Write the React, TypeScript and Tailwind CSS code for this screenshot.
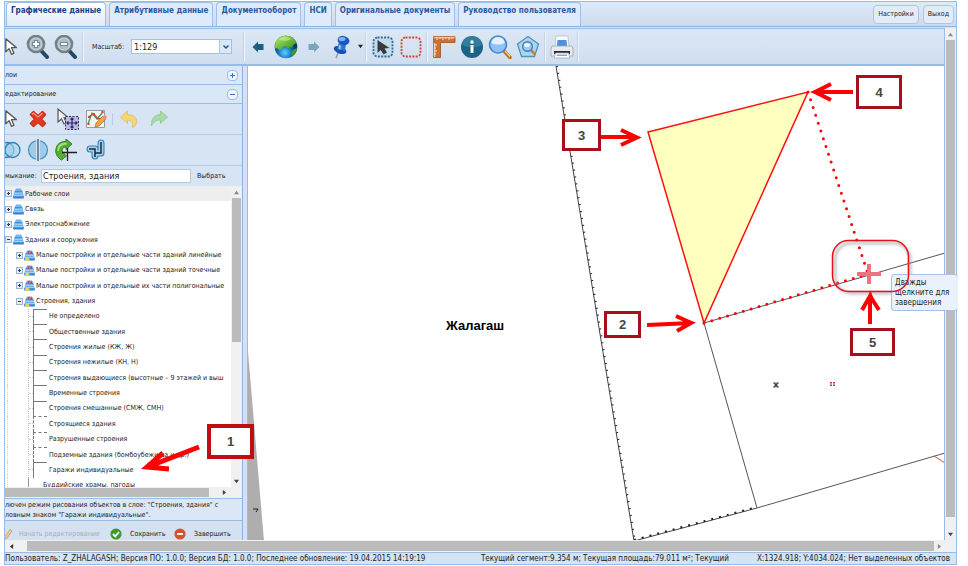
import React from "react";
import type { ReactNode } from "react";

/* ---------- icons ---------- */

const Cursor = () => (
  <svg viewBox="0 0 16 22" className="h-[18px] w-[13px]">
    <path d="M1 1v16l4-4 3 7 3-1.300-3-7h6z" fill="#fff" stroke="#555" strokeWidth="1.600" strokeLinejoin="round" />
  </svg>
);

const Lens = ({ plus }: { plus?: boolean }) => (
  <svg viewBox="0 0 24 24" className="h-6 w-6">
    <path d="M15.500 16l5.500 6" stroke="#1f4a66" strokeWidth="4" strokeLinecap="round" />
    <circle cx="10" cy="9" r="8" fill="#c3d3da" stroke="#757f84" strokeWidth="2.600" />
    <circle cx="10" cy="9" r="5.500" fill="#a9c0ca" />
    <path d={plus ? "M6 9h8M10 5v8" : "M6 9h8"} stroke="#6d8a98" strokeWidth="4" />
    <path d={plus ? "M7 9h6M10 6v6" : "M7 9h6"} stroke="#fff" strokeWidth="2" />
  </svg>
);

const FatArrow = ({ right }: { right?: boolean }) => (
  <svg viewBox="0 0 12 12" className="h-3 w-3">
    <path
      d={right ? "M11.500 6L6 .5V3H.5v6H6v2.500z" : "M.5 6L6 .5V3h5.500v6H6v2.500z"}
      fill={right ? "#7aa6bf" : "#1d5f82"}
    />
  </svg>
);

const Globe = () => (
  <svg viewBox="0 0 24 24" className="h-6 w-6">
    <defs>
      <radialGradient id="sea" cx=".45" cy=".75">
        <stop offset="0" stopColor="#5fd0fb" />
        <stop offset=".6" stopColor="#1473c4" />
        <stop offset="1" stopColor="#063a70" />
      </radialGradient>
      <linearGradient id="land" x1="0" y1="0" x2="1" y2="1">
        <stop offset="0" stopColor="#b4ee5c" />
        <stop offset="1" stopColor="#2c8a1c" />
      </linearGradient>
    </defs>
    <circle cx="12" cy="12" r="11.300" fill="url(#sea)" />
    <path
      d="M1.500 8C3 3.500 7 .8 12 .8c5 0 9 3 10.500 7l-3 2-1.500 3-2-1-1.500 2-2.500-2.500-3 .5-1.500 2.500-2 1-2-2-2 .500C.8 12 1 10 1.500 8z"
      fill="url(#land)"
    />
    <path d="M18 16l2.500-2 2.500-1c-.2 4-2.500 6.500-4.500 8-1.200-1.500-1.300-3.500-.5-5z" fill="#3c9c2c" />
    <path d="M5 4c4-3 10-2 12 0-3 2-8 3-12 0z" fill="#fff" opacity=".35" />
  </svg>
);

const Pin = () => (
  <svg viewBox="0 0 18 24" className="h-6 w-[18px]">
    <path d="M5.500 17L3 23" stroke="#8b98a5" strokeWidth="1.500" />
    <ellipse cx="7" cy="15" rx="6.500" ry="3.600" transform="rotate(20 7 15)" fill="#1450b5" />
    <path d="M6 7l7 2-1 7-8-2z" fill="#2b74dc" />
    <ellipse cx="10.500" cy="5.500" rx="6" ry="4.500" transform="rotate(15 10.500 5.500)" fill="#1a58c2" />
    <ellipse cx="9" cy="4" rx="3.500" ry="2" fill="#79b4f7" />
    <path d="M6 10l2 .5-.5 4-2-.5z" fill="#9ac6fa" />
  </svg>
);

const Marquee = ({ color, arrow }: { color: string; arrow?: boolean }) => (
  <svg viewBox="0 0 22 22" className="h-[22px] w-[22px]">
    <rect x="1.500" y="1.500" width="19" height="19" rx="4" fill={arrow ? "#c8daea" : "none"} stroke={color} strokeWidth="1.800" strokeDasharray="2 1.300" />
    {arrow && <path d="M5.500 4v13l3.200-3 2.800 4.500 3.500-2-2.500-4 5-.5z" fill="#333b42" />}
  </svg>
);

const Ruler = () => (
  <svg viewBox="0 0 24 24" className="h-6 w-6">
    <path d="M1.500 1.500h21.500v6H8.500v15h-7z" fill="#c9703d" stroke="#a04d20" strokeWidth=".8" />
    <path d="M1.500 2.500H23" stroke="#f2b58b" strokeWidth="1.500" />
    <path d="M2.500 8v14" stroke="#f2c19c" strokeWidth="1.500" />
    <path d="M5 2v3M8 2v2M11 2v3M14 2v2M17 2v3M20 2v2M2 10h3M2 13h2M2 16h3M2 19h2" stroke="#fff0e0" strokeWidth=".9" />
  </svg>
);

const Info = () => (
  <svg viewBox="0 0 24 24" className="h-6 w-6">
    <circle cx="12" cy="12" r="11" fill="#1a6486" />
    <path d="M2 10a10 9 0 0 1 20 0c-5 3-14 3-20 0z" fill="#3f8eae" opacity=".6" />
    <circle cx="12" cy="7" r="1.700" fill="#fff" />
    <path d="M12 10v8" stroke="#fff" strokeWidth="3" />
  </svg>
);

const Magnifier = () => (
  <svg viewBox="0 0 24 24" className="h-6 w-6">
    <path d="M16.500 16.500l5.500 6" stroke="#b9771f" strokeWidth="3.600" strokeLinecap="round" />
    <path d="M17 16l5 5.500" stroke="#f6cd7c" strokeWidth="1.200" />
    <circle cx="10" cy="9.500" r="8.500" fill="#8fc2f8" stroke="#4a83cc" strokeWidth="1.600" />
    <path d="M3.500 8a6.500 6 0 0 1 13 0c-4 2-9 2-13 0z" fill="#e3f1ff" />
  </svg>
);

const PolygonLens = () => (
  <svg viewBox="0 0 24 24" className="h-6 w-6">
    <path d="M12 1.500L22.500 9l-4 12.500h-13L1.500 9z" fill="#aed5ee" stroke="#4d94bd" strokeWidth="1.300" />
    <path d="M15 15l4 4.500" stroke="#c78128" strokeWidth="2.600" />
    <circle cx="11.500" cy="11.500" r="4.800" fill="#9acbfb" stroke="#3f7dc4" strokeWidth="1.400" />
    <ellipse cx="11" cy="10" rx="3" ry="2" fill="#e9f5ff" />
  </svg>
);

const Printer = () => (
  <svg viewBox="0 0 24 24" className="h-6 w-6">
    <path d="M6 1h12l1 11H5z" fill="#fafafa" stroke="#b9bec4" strokeWidth=".8" />
    <path d="M7.500 5h9l.7 7H6.800z" fill="#4d92e2" />
    <path d="M2 11h20l1 3v7H1v-7z" fill="#e8eaed" stroke="#a5abb2" strokeWidth=".9" />
    <path d="M4 16h16v3H4z" fill="#26292d" />
    <path d="M5.500 18h13l1.500 5H4z" fill="#fff" stroke="#a5abb2" strokeWidth=".8" />
    <path d="M7 19.500h10v1.500H6.500z" fill="#77afe8" />
  </svg>
);

const RedCross = () => (
  <svg viewBox="0 0 18 18" className="h-[18px] w-[18px]">
    <path d="M1.500 4.500l3-3L9 5.500l4.500-4 3 3L12.500 9l4 4.500-3 3-4.500-4-4.500 4-3-3 4-4.500z" fill="#e53a22" stroke="#d0301a" strokeWidth="1.600" strokeLinejoin="round" />
    <path d="M3 4.500l1.500-1.500L9 7l4.500-4" fill="none" stroke="#f79a86" strokeWidth="1.200" />
  </svg>
);

const MoveNode = () => (
  <svg viewBox="0 0 22 22" className="h-[22px] w-[22px]">
    <path d="M1 1v13l3.500-3 2.500 5 2.500-1.200-2.500-5h4.500z" fill="#f4f4f4" stroke="#555" strokeWidth="1.200" />
    <path d="M8.500 8.500h13v13h-13z" fill="#b6b5ee" stroke="#333" strokeWidth="1" strokeDasharray="2 1.500" />
    <path d="M15 10v10M10 15h10M13.500 11.500L15 10l1.500 1.500M13.500 18.500L15 20l1.500-1.500M11.500 13.500L10 15l1.500 1.500M18.500 13.500L20 15l-1.500 1.500" fill="none" stroke="#2a2a55" strokeWidth="1.200" />
  </svg>
);

const EditChart = () => (
  <svg viewBox="0 0 22 22" className="h-[22px] w-[22px]">
    <path d="M1.500 2.500h18v17h-18z" fill="#f3f3f3" stroke="#9a9a9a" />
    <path d="M3 16l4-11 5 6 6-7" fill="none" stroke="#3c9f45" strokeWidth="1.300" />
    <path d="M3 9l6-3 4 5 5-1" fill="none" stroke="#d8403a" strokeWidth="1.300" />
    <path d="M3 8h2v2H3zM8 5h2v2H8zM2.500 15h2v2h-2zM16.500 3h2v2h-2z" fill="#d8403a" />
    <path d="M10 19l1-4 7-7 3 3-7 7z" fill="#f4a445" stroke="#b56d1e" strokeWidth=".7" />
    <path d="M17.500 8.500l2-2 2.500 2.500-2 2z" fill="#ef8a87" />
  </svg>
);

const Turn = ({ redo }: { redo?: boolean }) => (
  <svg viewBox="0 0 18 18" className="h-[18px] w-[18px]">
    <path
      d={
        redo
          ? "M17.500 7L10.500 1v3.500C4 5 1 9 1.500 16c2-4.500 4.500-6 9-6V13.500z"
          : "M.5 7l7-6v3.500C14 5 18 8 16 14c-.6 2-2 3-4 3.300 2-3.300 0-6.800-4.500-7.300v3.500z"
      }
      fill={redo ? "#a8dba6" : "#f3d679"}
      stroke={redo ? "#8cc78c" : "#dfbb58"}
      strokeWidth=".8"
    />
  </svg>
);

const Union = () => (
  <svg viewBox="0 0 17 20" className="h-5 w-[17px]">
    <circle cx="1.500" cy="10" r="7.500" fill="#a9d3ee" stroke="#2c82b4" strokeWidth="1.300" />
    <circle cx="7.500" cy="10" r="7.500" fill="#a9d3ee" fillOpacity=".6" stroke="#2c82b4" strokeWidth="1.300" />
  </svg>
);

const Split = () => (
  <svg viewBox="0 0 22 22" className="h-[22px] w-[22px]">
    <circle cx="11" cy="11" r="9.500" fill="#9dcbe9" stroke="#4690bd" strokeWidth="1.200" />
    <path d="M11 0v22" stroke="#dcecf7" strokeWidth="3.500" />
    <path d="M11 0v22" stroke="#3b5567" strokeWidth="1.300" />
  </svg>
);

const Rotate = () => (
  <svg viewBox="0 0 22 22" className="h-[22px] w-[22px]">
    <path d="M11 0l6 5-6 5.500V8C8 8 6.500 10 7.500 13l4 4-5 4C2 18 0 14 1 10c1-5 4-7.500 10-7.500z" fill="#56ad35" stroke="#2f7d1a" />
    <path d="M3 12c0-5 2.500-7.500 8.500-7.500" fill="none" stroke="#a5e07e" strokeWidth="1.800" />
    <path d="M12.500 9v13M7 13.500h15" stroke="#222" strokeWidth="1.300" />
  </svg>
);

const Buffer = () => (
  <svg viewBox="0 0 20 22" className="h-[22px] w-5">
    <path d="M4 10h5v7M9 14h6V4" fill="none" stroke="#3182bd" strokeWidth="7" strokeLinecap="round" strokeLinejoin="round" />
    <path d="M4 10h5v7M9 14h6V4" fill="none" stroke="#a5d2f1" strokeWidth="4.800" strokeLinecap="round" strokeLinejoin="round" />
    <path d="M3 10h6v8M9 14h6V3" fill="none" stroke="#1d2a33" strokeWidth="1.500" />
  </svg>
);

const Layers = ({ marks }: { marks?: boolean }) => (
  <svg viewBox="0 0 11 11" className="h-[11px] w-[11px] shrink-0">
    <path d="M3 .5h5l1 2H2z" fill="#74b6ec" />
    <path d="M1.800 2.500h7.400l.8 3H1z" fill="#3f95dc" />
    <path d="M1 5.500h9l.8 3H.2z" fill="#69b3ee" />
    <path d="M.2 8h10.600v2.500H.2z" fill="#2f83cd" />
    <path d="M1.500 5h8M.8 7.800h9.400" stroke="#d5ebfb" strokeWidth=".7" />
    {marks && <path d="M4 3l1.500-2M6.500 3.500L8 1.500" stroke="#e0352c" strokeWidth="1.400" />}
    {marks && <path d="M1.500 8h3l1.500 2.500H1z" fill="#f0d83c" />}
  </svg>
);

const Pencil = () => (
  <svg viewBox="0 0 8 12" className="h-3 w-2 shrink-0">
    <path d="M0 8.500L5 1.500l2 1.500-5 7-2 1z" fill="#f6c98c" stroke="#c79a62" strokeWidth=".8" />
  </svg>
);

const RoundBadge = ({ ok }: { ok?: boolean }) => (
  <svg viewBox="0 0 12 12" className="h-3 w-3 shrink-0">
    <circle cx="6" cy="6" r="5.600" fill={ok ? "#3f9a2a" : "#d9512a"} />
    <path d={ok ? "M3 6l2.300 2.300L9 4" : "M3 6h6"} fill="none" stroke="#fff" strokeWidth="1.900" />
  </svg>
);

const Triangle = ({ dir, color }: { dir: "up" | "down" | "left" | "right"; color: string }) => {
  const d = { up: "M0 5l3-4 3 4z", down: "M0 1l3 4 3-4z", left: "M5 0L1 3l4 3z", right: "M1 0l4 3-4 3z" }[dir];
  return (
    <svg viewBox="0 0 6 6" className="h-[5px] w-[5px]">
      <path d={d} fill={color} />
    </svg>
  );
};

/* ---------- small building blocks ---------- */

const Group = ({ children, className = "" }: { children: ReactNode; className?: string }) => (
  <div className={`flex h-[30px] items-center border-r border-[#c3d3e6] shadow-[1px_0_0_#eef4fb] ${className}`}>{children}</div>
);

const Tool = ({ label, children, className = "w-7 justify-center" }: { label: string; children: ReactNode; className?: string }) => (
  <button type="button" aria-label={label} className={`flex h-7 shrink-0 items-center ${className}`}>
    {children}
  </button>
);

const VScroll = ({ thumb, className = "w-[11px]" }: { thumb: string; className?: string }) => (
  <div className={`flex shrink-0 flex-col items-center bg-[#f0f0f0] ${className}`}>
    <div className="flex h-3 items-center"><Triangle dir="up" color="#8a8a8a" /></div>
    <div className="flex w-full flex-1 flex-col px-px"><div className={`w-full bg-[#bbbbbb] ${thumb}`} /></div>
    <div className="flex h-3 items-center"><Triangle dir="down" color="#444" /></div>
  </div>
);

/* ---------- tree ---------- */

type Row = { text: string; level: 0 | 1 | 2 | 3; open?: boolean; mark?: "red" | "solid" | "dash" };

const rows: Row[] = [
  { text: "Рабочие слои", level: 0 },
  { text: "Связь", level: 0 },
  { text: "Электроснабжение", level: 0 },
  { text: "Здания и сооружения", level: 0, open: true },
  { text: "Малые постройки и отдельные части зданий линейные", level: 1 },
  { text: "Малые постройки и отдельные части зданий точечные", level: 1 },
  { text: "Малые постройки и отдельные их части полигональные", level: 1 },
  { text: "Строения, здания", level: 1, open: true },
  { text: "Не определено", level: 2, mark: "red" },
  { text: "Общественные здания", level: 2, mark: "solid" },
  { text: "Строения жилые (КЖ, Ж)", level: 2, mark: "solid" },
  { text: "Строения нежилые (КН, Н)", level: 2, mark: "solid" },
  { text: "Строения выдающиеся (высотные – 9 этажей и выш", level: 2, mark: "solid" },
  { text: "Временные строения", level: 2, mark: "solid" },
  { text: "Строения смешанные (СМЖ, СМН)", level: 2, mark: "solid" },
  { text: "Строящиеся здания", level: 2, mark: "dash" },
  { text: "Разрушенные строения", level: 2, mark: "dash" },
  { text: "Подземные здания (бомбоубежища и др.)", level: 2, mark: "dash" },
  { text: "Гаражи индивидуальные", level: 2, mark: "solid" },
  { text: "Буддийские храмы, пагоды", level: 3 },
];

const markStyle = {
  red: "border-[#f04848]",
  solid: "border-[#777]",
  dash: "border-dashed border-[#777]",
};

const Expander = ({ open }: { open?: boolean }) => (
  <svg viewBox="0 0 7 7" className="h-[7px] w-[7px] shrink-0">
    <rect x=".5" y=".5" width="6" height="6" fill="#e3ebf5" stroke="#9db3cf" />
    <path d={open ? "M2 3.500h3" : "M2 3.500h3M3.500 2v3"} stroke="#2c3e57" />
  </svg>
);

const TreeRow = ({ row, first }: { row: Row; first: boolean }) => {
  if (row.level === 2)
    return (
      <li className="ml-[2px] flex min-h-0 flex-1 items-center border-l border-dotted border-[#d4d4d4] pl-5">
        <span className="flex h-full w-3 shrink-0 items-center border-l border-dotted border-[#c8c8c8]">
          <span className="w-1 border-t border-dotted border-[#c8c8c8]" />
        </span>
        <span className={`-ml-[7px] mr-[2px] h-full w-[14px] shrink-0 border-l border-t ${markStyle[row.mark ?? "solid"]}`} />
        <span className="whitespace-nowrap">{row.text}</span>
      </li>
    );
  if (row.level === 3)
    return (
      <li className="ml-[2px] flex min-h-0 flex-1 items-center border-l border-dotted border-[#d4d4d4] pl-5">
        <span className="mr-[14px] h-full border-l border-[#999]" />
        <span className="whitespace-nowrap">{row.text}</span>
      </li>
    );
  return (
    <li
      className={`flex min-h-0 flex-1 items-center ${row.level === 1 ? "ml-[2px] border-l border-dotted border-[#d4d4d4] pl-2" : ""} ${
        first ? "bg-[#eeeeee]" : ""
      }`}
    >
      <Expander open={row.open} />
      <span className="mx-px flex"><Layers marks={row.level === 1} /></span>
      <span className="whitespace-nowrap">{row.text}</span>
    </li>
  );
};

/* ---------- map ---------- */

const MapDrawing = () => (
  <svg viewBox="248 66 697 475" className="absolute left-0 top-0 h-[475px] w-[697px]">
    <defs>
      <filter id="soft" x="-20%" y="-20%" width="150%" height="150%">
        <feGaussianBlur stdDeviation="1.500" />
      </filter>
    </defs>
    <path d="M247 340L264 541H247z" fill="#aeaeae" />
    <path d="M253 509l5 0-2 3" fill="none" stroke="#222" />
    <path d="M556 66L634 541L757 508" fill="none" stroke="#444" />
    <path d="M557 66L635 541" fill="none" stroke="#222" strokeWidth="2" strokeDasharray="1 6" />
    <path d="M634 540L757 507" fill="none" stroke="#222" strokeWidth="2" strokeDasharray="2 6" />
    <path d="M757 508L945 453" fill="none" stroke="#555" />
    <path d="M704 323L757 508M704 323L945 253" fill="none" stroke="#555" />
    <path d="M934 456L945 463" stroke="#f04040" />
    <path d="M648 132L808 92L704 323z" fill="#ffffc0" stroke="#ff1010" strokeWidth="1.500" />
    <path d="M808 92L868 274" stroke="#f00" strokeWidth="3" strokeDasharray="0 8.200" strokeLinecap="round" />
    <path d="M704 323L868 274" stroke="#f00" strokeWidth="3" strokeDasharray="0 8.200" strokeLinecap="round" />
    <rect x="835" y="243" width="75" height="50" rx="16" fill="none" stroke="#999" strokeWidth="3" opacity=".6" filter="url(#soft)" />
    <path d="M857 274h24M869 264v20" stroke="#ec7380" strokeWidth="4" />
    <path d="M774 383l4 4M778 383l-4 4M774 385h4M776 383v4M773 387h6M773 383h6" stroke="#333" strokeWidth=".8" />
    <path d="M830 382h2v1.500h-2zM833 382h2v1.500h-2zM830 384.500h2v1.500h-2zM833 384.500h2v1.500h-2z" fill="#f02020" />
  </svg>
);

const Arrows = () => (
  <svg viewBox="0 0 957 566" className="absolute left-0 top-0 h-[566px] w-[957px]" fill="none" stroke="#f00" strokeWidth="4">
    <path d="M199 447L150 466M163 453L147 467L169 469" strokeWidth="5" />
    <path d="M647 325L691 323M676 316L691 323L677 331" />
    <path d="M601 137h35M621 130L637 137.500L621 145" />
    <path d="M853 92h-36M831 84L815 92L831 100" />
    <path d="M870 324v-26M862 310L870 296L879 310" />
    <path d="M142 469l14-10 3 9zM696 322.500l-12-4v9zM641 137.500l-12-4v8zM810 92l12-4v8zM870.500 290l-4 12h8z" fill="#f00" stroke="none" />
    <rect x="832.500" y="240.500" width="76" height="51" rx="16" stroke="#e8101c" strokeWidth="1.500" />
  </svg>
);

const callouts = [
  { n: 1, box: "left-[207px] top-[424px] h-[35px] w-[47px] border-4 border-[#c00d12]" },
  { n: 2, box: "left-[604px] top-[311px] h-[27px] w-[37px] border-[3px] border-[#a5101c]" },
  { n: 3, box: "left-[562px] top-[119px] h-8 w-[39px] border-[3px] border-[#a5101c]" },
  { n: 4, box: "left-[856px] top-[75px] h-[34px] w-[46px] border-[3px] border-[#a5101c]" },
  { n: 5, box: "left-[850px] top-[328px] h-7 w-[45px] border-[3px] border-[#a5101c]" },
];

/* ---------- page ---------- */

const tabs = [
  "Графические данные",
  "Атрибутивные данные",
  "Документооборот",
  "НСИ",
  "Оригинальные документы",
  "Руководство пользователя",
];

const Section = ({ title, open }: { title: string; open?: boolean }) => (
  <div className="flex h-[19px] shrink-0 items-center justify-between border-b border-[#99bbe8] bg-[#dae7f6] pr-1">
    <span>{title}</span>
    <button type="button" aria-label={title} className="flex h-[11px] w-[11px] items-center justify-center rounded-sm border border-[#9dbde6] bg-[#eef5fd]">
      <svg viewBox="0 0 7 7" className="h-[7px] w-[7px]">
        <path d={open ? "M1 3.500h5" : "M1 3.500h5M3.500 1v5"} stroke="#3f72b5" />
      </svg>
    </button>
  </div>
);

export default function App() {
  return (
    <div className="relative h-screen w-full overflow-hidden bg-white pb-px pl-1 pr-[11px] pt-px font-['DejaVu_Sans_Condensed','DejaVu_Sans',sans-serif] text-[7px] leading-[10px] text-[#222]">
      <div className="flex h-full flex-col border-l border-r border-t border-[#99bbe8]">
        {/* tabs */}
        <header className="flex h-[25px] shrink-0 items-stretch justify-between border-b border-[#8db2e3] bg-linear-to-b from-[#dfeaf6] to-[#cbdbee]">
          <nav className="flex gap-[3px] pl-px text-[8px] font-bold text-[#2b5a9b]">
            {tabs.map((t, i) => (
              <button
                key={t}
                type="button"
                className={`flex items-start whitespace-nowrap rounded-t-sm border border-b-0 border-[#9dbfe8] px-1 pt-[3px] ${
                  i === 0 ? "bg-linear-to-b from-white to-[#dfe9f7] text-[#15428b]" : "bg-[#deebfd]"
                }`}
              >
                {t}
              </button>
            ))}
          </nav>
          <div className="flex items-center gap-1 pr-[2px]">
            <button type="button" className="h-[19px] rounded-sm border border-[#b5bdf2] bg-[#e2ecf9] px-1">Настройки</button>
            <button type="button" className="h-[19px] rounded-sm border border-[#b5bdf2] bg-[#e2ecf9] px-1">Выход</button>
          </div>
        </header>

        <div className="flex min-h-0 flex-1 border-t border-[#d3e2f5]">
          <div className="flex min-w-0 flex-1 flex-col">
            {/* toolbar */}
            <div className="flex h-[38px] shrink-0 items-center border-b-2 border-t border-b-[#99bbe8] border-t-[#99bbe8] bg-linear-to-b from-[#dce7f4] to-[#cfdeef]">
              <Group className="w-[78px]">
                <Tool label="Выбор" className="w-[19px]"><Cursor /></Tool>
                <Tool label="Увеличить"><Lens plus /></Tool>
                <Tool label="Уменьшить"><Lens /></Tool>
              </Group>
              <Group className="w-[161px] pl-[9px]">
                <label htmlFor="scale">Масштаб:</label>
                <span className="ml-auto mr-[11px] flex h-[15px] w-[101px] border border-[#a9bfdc] bg-white">
                  <select id="scale" className="min-w-0 flex-1 appearance-none pl-[2px] text-[9px] outline-none">
                    <option>1:129</option>
                  </select>
                  <span className="flex w-3 items-center justify-center border-l border-[#a9c4e6] bg-[#d9e7f8]">
                    <svg viewBox="0 0 6 4" className="h-1 w-[6px]"><path d="M.5 .5L3 3 5.500 .5" fill="none" stroke="#2a4f86" strokeWidth="1.400" /></svg>
                  </span>
                </span>
              </Group>
              <Group className="w-[122px]">
                <Tool label="Назад"><FatArrow /></Tool>
                <Tool label="Весь мир"><Globe /></Tool>
                <Tool label="Вперёд"><FatArrow right /></Tool>
                <Tool label="Закладка"><Pin /></Tool>
                <Tool label="Список закладок" className="w-2 justify-center"><Triangle dir="down" color="#222" /></Tool>
              </Group>
              <Group className="w-[61px] pl-[3px]">
                <Tool label="Выделить"><Marquee color="#2c6f9b" arrow /></Tool>
                <Tool label="Снять выделение"><Marquee color="#d8432f" /></Tool>
              </Group>
              <Group className="w-[118px] pl-[3px]">
                <Tool label="Измерить"><Ruler /></Tool>
                <Tool label="Информация"><Info /></Tool>
                <Tool label="Поиск"><Magnifier /></Tool>
                <Tool label="Поиск в полигоне"><PolygonLens /></Tool>
              </Group>
              <Group className="w-[33px] pl-[3px]">
                <Tool label="Печать"><Printer /></Tool>
              </Group>
            </div>

            <div className="flex min-h-0 flex-1">
              {/* editing panel */}
              <aside className="flex w-[238px] shrink-0 flex-col border-r border-[#8db2e3] bg-[#d7e4f3]">
                <Section title="лои" />
                <Section title="едактирование" open />
                <div className="flex h-[31px] shrink-0 items-center border-b border-[#b3cceb]">
                  <Tool label="Выбрать объект" className="w-[19px]"><Cursor /></Tool>
                  <Tool label="Удалить"><RedCross /></Tool>
                  <Tool label="Переместить" className="w-8 justify-center"><MoveNode /></Tool>
                  <Tool label="Изменить узлы" className="w-6 justify-center"><EditChart /></Tool>
                  <span className="ml-1 h-3 border-l border-[#b9cde6]" />
                  <Tool label="Отменить" className="w-8 justify-center"><Turn /></Tool>
                  <Tool label="Повторить"><Turn redo /></Tool>
                </div>
                <div className="flex h-[31px] shrink-0 items-center border-b border-[#b3cceb]">
                  <Tool label="Объединить" className="w-[19px]"><Union /></Tool>
                  <Tool label="Разделить"><Split /></Tool>
                  <Tool label="Повернуть"><Rotate /></Tool>
                  <Tool label="Буфер" className="w-8 justify-center"><Buffer /></Tool>
                </div>
                <div className="flex h-5 shrink-0 items-center">
                  <label htmlFor="snap" className="w-9 shrink-0 whitespace-nowrap">мыкание:</label>
                  <input id="snap" defaultValue="Строения, здания" className="h-[14px] w-[150px] border border-[#b5c8e2] bg-white px-px text-[9px]" />
                  <button type="button" className="pl-[6px]">Выбрать</button>
                </div>
                <div className="flex min-h-0 flex-1 bg-white">
                  <div className="min-w-0 flex-1 overflow-hidden">
                    <ul className="flex h-[307px] flex-col">
                      {rows.map((r, i) => <TreeRow key={r.text} row={r} first={i === 0} />)}
                    </ul>
                  </div>
                  <VScroll thumb="h-[144px]" />
                </div>
                <div className="flex h-[11px] shrink-0 items-center bg-[#f0f0f0]">
                  <div className="h-[9px] w-[204px] bg-[#bbbbbb]" />
                  <div className="flex flex-1 justify-end pr-[15px]"><Triangle dir="right" color="#444" /></div>
                </div>
                <p className="h-[23px] shrink-0 whitespace-nowrap border-y border-[#99bbe8] bg-[#dbe7f5] pt-px">
                  лючен режим рисования объектов в слое: "Строения, здания" с
                  <br />
                  ловным знаком "Гаражи индивидуальные".
                </p>
                <div className="flex h-[19px] shrink-0 items-end bg-[#d3e1f1]">
                  <button type="button" disabled className="flex w-[105px] items-center gap-[6px] whitespace-nowrap text-[#a5aeb9]"><Pencil />Начать редактирование</button>
                  <button type="button" className="flex w-16 items-center gap-2"><RoundBadge ok />Сохранить</button>
                  <button type="button" className="flex items-center gap-2"><RoundBadge />Завершить</button>
                </div>
              </aside>
              <div className="w-[5px] shrink-0 border-r border-[#99bbe8] bg-[#d3e1f3]" />

              {/* map */}
              <main className="relative min-w-0 flex-1 overflow-hidden bg-white">
                <MapDrawing />
                <span className="absolute left-[198px] top-[252px] font-['Liberation_Sans',sans-serif] text-[13px] font-bold leading-4 text-black">Жалагаш</span>
              </main>
            </div>
          </div>
          <VScroll thumb="h-[477px]" className="w-[12px] border-l border-[#99bbe8]" />
        </div>

        {/* page scroll bar */}
        <div className="flex h-3 shrink-0 items-center bg-[#f0f0f0] pr-[12px]">
          <div className="flex w-[22px] justify-start pl-1"><Triangle dir="left" color="#333" /></div>
          <div className="h-[10px] flex-1 bg-[#bbbbbb]" />
          <div className="flex w-[10px] justify-center"><Triangle dir="right" color="#888" /></div>
        </div>

        <footer className="flex h-[13px] shrink-0 items-center justify-between whitespace-nowrap border-y border-[#99bbe8] bg-[#d5e3f3] text-[8px]">
          <span>Пользователь: Z_ZHALAGASH; Версия ПО: 1.0.0; Версия БД: 1.0.0; Последнее обновление: 19.04.2015 14:19:19</span>
          <span className="flex gap-7 pr-[6px]">
            <span>Текущий сегмент:9.354 м; Текущая площадь:79.011 м²; Текущий</span>
            <span>X:1324.918; Y:4034.024; Нет выделенных объектов</span>
          </span>
        </footer>
      </div>

      {/* hint and numbered callouts over the window */}
      <div role="tooltip" className="absolute left-[891px] top-[274px] h-[37px] w-[67px] rounded-sm border border-r-0 border-[#a3c2e3] bg-[#e9f2fc] pl-[3px] pt-[3px] text-[8px]">
        Дважды
        <br />
        щелкните для
        <br />
        завершения
      </div>
      <Arrows />
      {callouts.map((c) => (
        <span key={c.n} className={`absolute flex items-center justify-center bg-white font-['Liberation_Sans',sans-serif] text-[13px] font-bold leading-none text-[#444] ${c.box}`}>
          {c.n}
        </span>
      ))}
    </div>
  );
}
